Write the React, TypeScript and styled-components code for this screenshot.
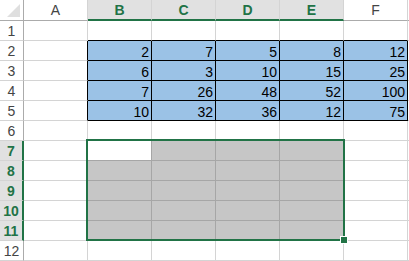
import React from 'react'
import styled, { createGlobalStyle } from 'styled-components'

const GlobalStyle = createGlobalStyle`
  html, body {
    margin: 0;
    padding: 0;
    background: #fff;
    overflow: hidden;
  }
`

const GREEN = '#217346'
const GRID = '#d4d4d4'
const HEAD_LINE = '#ababab'

const Sheet = styled.div`
  position: relative;
  display: grid;
  grid-template-columns: 24px repeat(6, 64px) 1fr;
  grid-template-rows: 21px repeat(12, 20px);
  width: 409px;
  height: 261px;
  font-family: 'Liberation Sans', Arial, sans-serif;
  overflow: hidden;
`

const Corner = styled.div`
  position: relative;
  background: #fff;
  border-right: 1px solid ${HEAD_LINE};
  border-bottom: 1px solid ${HEAD_LINE};
  box-sizing: border-box;

  &::after {
    content: '';
    position: absolute;
    right: 3px;
    bottom: 3px;
    width: 0;
    height: 0;
    border-left: 13px solid transparent;
    border-bottom: 13px solid #dfdfdf;
  }
`

const ColHead = styled.div<{ $active?: boolean }>`
  box-sizing: border-box;
  display: flex;
  align-items: center;
  justify-content: center;
  font-size: 14px;
  background: ${(p) => (p.$active ? '#e1e1e1' : '#fff')};
  color: ${(p) => (p.$active ? GREEN : '#444')};
  font-weight: ${(p) => (p.$active ? 'bold' : 'normal')};
  border-right: 1px solid ${GRID};
  border-bottom: ${(p) => (p.$active ? `2px solid ${GREEN}` : `1px solid ${HEAD_LINE}`)};
  padding-top: ${(p) => (p.$active ? '1px' : '0')};
`

const RowHead = styled.div<{ $active?: boolean }>`
  box-sizing: border-box;
  display: flex;
  align-items: center;
  justify-content: center;
  font-size: 14px;
  background: ${(p) => (p.$active ? '#e1e1e1' : '#fff')};
  color: ${(p) => (p.$active ? GREEN : '#444')};
  font-weight: ${(p) => (p.$active ? 'bold' : 'normal')};
  border-bottom: 1px solid ${GRID};
  border-right: ${(p) => (p.$active ? `2px solid ${GREEN}` : `1px solid ${HEAD_LINE}`)};
`

const Cell = styled.div<{ $fill: string; $right: string; $bottom: string }>`
  box-sizing: border-box;
  display: flex;
  align-items: center;
  justify-content: flex-end;
  padding: 2px 2px 0 0;
  font-size: 14px;
  color: #000;
  background: ${(p) => p.$fill};
  border-right: 1px solid ${(p) => p.$right};
  border-bottom: 1px solid ${(p) => p.$bottom};
`

const Selection = styled.div`
  position: absolute;
  left: 86px;
  top: 139px;
  width: 259px;
  height: 102px;
  box-sizing: border-box;
  border: 2px solid ${GREEN};
  pointer-events: none;
`

const FillHandle = styled.div`
  position: absolute;
  left: 340px;
  top: 236px;
  width: 6px;
  height: 6px;
  background: ${GREEN};
  border: 1px solid #fff;
`

const columns = ['A', 'B', 'C', 'D', 'E', 'F', '']

const data: Record<number, number[]> = {
  2: [2, 7, 5, 8, 12],
  3: [6, 3, 10, 15, 25],
  4: [7, 26, 48, 52, 100],
  5: [10, 32, 36, 12, 75],
}

const inBlue = (r: number, c: number) => r >= 2 && r <= 5 && c >= 1 && c <= 5
const inSel = (r: number, c: number) => r >= 7 && r <= 11 && c >= 1 && c <= 4
const selCol = (c: number) => c >= 1 && c <= 4
const selRow = (r: number) => r >= 7 && r <= 11

const lineColor = (r1: number, c1: number, r2: number, c2: number) => {
  if (inBlue(r1, c1) || inBlue(r2, c2)) return '#000'
  if (inSel(r1, c1) && inSel(r2, c2)) return '#a6a6a6'
  return GRID
}

const App = () => {
  const rows = Array.from({ length: 12 }, (_, i) => i + 1)
  return (
    <>
      <GlobalStyle />
      <Sheet>
        <Corner />
        {columns.map((col, c) => (
          <ColHead key={col + c} $active={selCol(c)}>
            {col}
          </ColHead>
        ))}
        {rows.map((r) => (
          <React.Fragment key={r}>
            <RowHead $active={selRow(r)}>{r}</RowHead>
            {columns.map((_, c) => {
              let fill = '#fff'
              if (inBlue(r, c)) fill = '#9bc2e6'
              else if (inSel(r, c) && !(r === 7 && c === 1)) fill = '#c6c6c6'
              const value = inBlue(r, c) ? data[r][c - 1] : ''
              return (
                <Cell
                  key={c}
                  $fill={fill}
                  $right={lineColor(r, c, r, c + 1)}
                  $bottom={lineColor(r, c, r + 1, c)}
                >
                  {value}
                </Cell>
              )
            })}
          </React.Fragment>
        ))}
        <Selection />
        <FillHandle />
      </Sheet>
    </>
  )
}

export default App
